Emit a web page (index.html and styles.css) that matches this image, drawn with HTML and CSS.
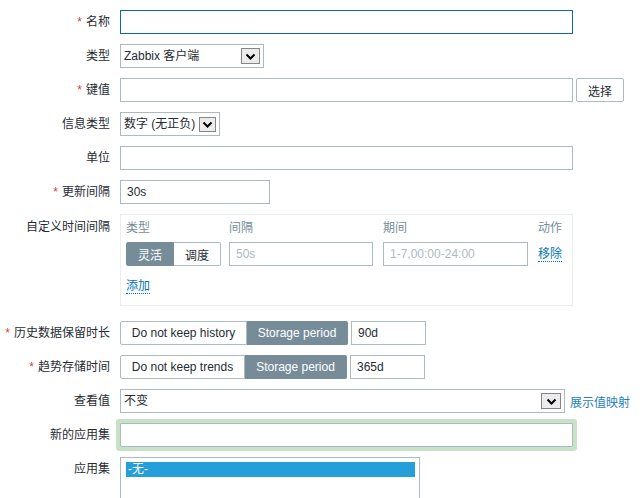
FILE: index.html
```html
<!DOCTYPE html>
<html lang="zh">
<head>
<meta charset="utf-8">
<title>Item</title>
<link rel="stylesheet" href="styles.css">
</head>
<body>
<div class="form">
  <div class="label"><span class="req">*</span>名称</div>
  <div class="field"><input class="input w-full focus" type="text" value=""></div>

  <div class="label">类型</div>
  <div class="field">
    <div class="select w-type"><span class="sel-text">Zabbix 客户端</span><span class="sel-btn"><svg width="11" height="7" viewBox="0 0 11 7"><path d="M1.5 1.5 L5.5 5.5 L9.5 1.5" fill="none" stroke="#000" stroke-width="2"/></svg></span></div>
  </div>

  <div class="label"><span class="req">*</span>键值</div>
  <div class="field"><input class="input w-full" type="text" value=""><button class="btn">选择</button></div>

  <div class="label">信息类型</div>
  <div class="field">
    <div class="select w-info"><span class="sel-text">数字 (无正负)</span><span class="sel-btn"><svg width="11" height="7" viewBox="0 0 11 7"><path d="M1.5 1.5 L5.5 5.5 L9.5 1.5" fill="none" stroke="#000" stroke-width="2"/></svg></span></div>
  </div>

  <div class="label">单位</div>
  <div class="field"><input class="input w-full" type="text" value=""></div>

  <div class="label"><span class="req">*</span>更新间隔</div>
  <div class="field"><input class="input w-interval" type="text" value="30s"></div>

  <div class="label label-top">自定义时间间隔</div>
  <div class="field field-top custom-row">
    <div class="custom">
      <div class="ci-grid">
        <div class="ci-head">类型</div>
        <div class="ci-head">间隔</div>
        <div class="ci-head">期间</div>
        <div class="ci-head">动作</div>
        <div class="ci-cell">
          <div class="seg">
            <span class="seg-item active">灵活</span><span class="seg-item">调度</span>
          </div>
        </div>
        <div class="ci-cell"><input class="input w-ci" type="text" placeholder="50s"></div>
        <div class="ci-cell"><input class="input w-ci2" type="text" placeholder="1-7,00:00-24:00"></div>
        <div class="ci-cell"><a class="link dotted">移除</a></div>
      </div>
      <div class="ci-add"><a class="link dotted">添加</a></div>
    </div>
  </div>

  <div class="label"><span class="req">*</span>历史数据保留时长</div>
  <div class="field">
    <div class="seg">
      <span class="seg-item w-h1">Do not keep history</span><span class="seg-item w-h2 active">Storage period</span>
    </div>
    <input class="input w-period" type="text" value="90d">
  </div>

  <div class="label"><span class="req">*</span>趋势存储时间</div>
  <div class="field">
    <div class="seg">
      <span class="seg-item w-t1">Do not keep trends</span><span class="seg-item w-t2 active">Storage period</span>
    </div>
    <input class="input w-period" type="text" value="365d">
  </div>

  <div class="label">查看值</div>
  <div class="field">
    <div class="select w-value"><span class="sel-text">不变</span><span class="sel-btn"><svg width="11" height="7" viewBox="0 0 11 7"><path d="M1.5 1.5 L5.5 5.5 L9.5 1.5" fill="none" stroke="#000" stroke-width="2"/></svg></span></div>
    <a class="link map-link">展示值映射</a>
  </div>

  <div class="label">新的应用集</div>
  <div class="field"><input class="input w-full highlight" type="text" value=""></div>

  <div class="label">应用集</div>
  <div class="field field-top">
    <div class="listbox">
      <div class="opt selected">-无-</div>
    </div>
  </div>
</div>
</body>
</html>
```

FILE: styles.css
```css
* { box-sizing: border-box; }

html, body {
  margin: 0;
  padding: 0;
  background: #ffffff;
}

body {
  font-family: "Liberation Sans", "Noto Sans CJK SC", Arial, sans-serif;
  font-size: 12px;
  color: #1f2c33;
  overflow: hidden;
}

.form {
  display: grid;
  grid-template-columns: 110px auto;
  column-gap: 10px;
  row-gap: 10px;
  padding-top: 10px;
}

.label {
  text-align: right;
  line-height: 24px;
  height: 24px;
  white-space: nowrap;
}

.label-top {
  padding-top: 1px;
}

.req {
  color: #e33734;
  margin-right: 4px;
}

.field {
  display: flex;
  align-items: center;
  height: 24px;
}

.field-top {
  align-items: flex-start;
  height: auto;
}

.custom-row {
  margin-bottom: 5px;
}

.input {
  height: 24px;
  border: 1px solid #acbbc2;
  background: #ffffff;
  padding: 0 6px;
  font-family: inherit;
  font-size: 12px;
  color: #1f2c33;
  outline: none;
  margin: 0;
}

.input::placeholder {
  color: #acbbc2;
}

.focus {
  border-color: #0b6aa2;
}

.highlight {
  box-shadow: 0 0 0 4px #c7e2c7;
  border-radius: 1px;
}

.w-full { width: 453px; }
.w-interval { width: 150px; }
.w-ci { width: 144px; }
.w-ci2 { width: 145px; }
.w-period { width: 75px; margin-left: 3px; }

.btn {
  margin-left: 3px;
  width: 48px;
  height: 24px;
  border: 1px solid #acbbc2;
  border-radius: 2px;
  background: #ffffff;
  font-family: inherit;
  font-size: 12px;
  color: #1f2c33;
  padding: 0;
}

.select {
  display: flex;
  align-items: center;
  justify-content: space-between;
  height: 24px;
  border: 1px solid #acbbc2;
  background: #ffffff;
  padding: 0 3px 0 3px;
  white-space: nowrap;
}

.w-type { width: 144px; }
.w-info { width: 100px; padding-right: 3px; }
.w-value { width: 445px; }

.sel-text {
  line-height: 22px;
}

.sel-btn {
  display: flex;
  align-items: center;
  justify-content: center;
  width: 19px;
  height: 16px;
  border: 1px solid #858585;
  background: #ececec;
  flex: none;
}

.w-info .sel-btn {
  width: 17px;
  height: 15px;
}

.w-value .sel-btn {
  width: 20px;
}

.custom {
  width: 453px;
  border: 1px solid #ebeef0;
  padding: 4px 5px 10px 5px;
}

.ci-grid {
  display: grid;
  grid-template-columns: 103px 154px 155px auto;
  row-gap: 5px;
}

.ci-head {
  color: #768d99;
  line-height: 18px;
  height: 18px;
}

.ci-cell {
  display: flex;
  align-items: center;
  height: 24px;
}

.ci-add {
  margin-top: 11px;
  height: 18px;
  display: flex;
  align-items: center;
}

.link {
  color: #0275b8;
  text-decoration: none;
  cursor: pointer;
}

.dotted {
  border-bottom: 1px dotted #0275b8;
  line-height: 14px;
  display: inline-block;
}

.map-link {
  margin-left: 5px;
  color: #1f7fc0;
}

.seg {
  display: flex;
  height: 24px;
}

.seg-item {
  display: flex;
  align-items: center;
  justify-content: center;
  height: 24px;
  border: 1px solid #acbbc2;
  background: #ffffff;
  color: #1f2c33;
  white-space: nowrap;
}

.seg-item:first-child {
  border-radius: 2px 0 0 2px;
  width: 48px;
}

.seg-item:last-child {
  border-radius: 0 2px 2px 0;
  border-left: none;
  width: 47px;
}

.seg-item.active {
  background: #768d99;
  border-color: #768d99;
  color: #ffffff;
}

.seg-item.w-h1 { width: 127px; }
.seg-item.w-h2 { width: 101px; }
.seg-item.w-t1 { width: 125px; }
.seg-item.w-t2 { width: 102px; }

.listbox {
  width: 300px;
  height: 46px;
  border: 1px solid #acbbc2;
  padding: 4px 4px 0 5px;
}

.opt {
  height: 15px;
  line-height: 15px;
  padding-left: 2px;
}

.opt.selected {
  background: #259fd9;
  color: #ffffff;
}
```
